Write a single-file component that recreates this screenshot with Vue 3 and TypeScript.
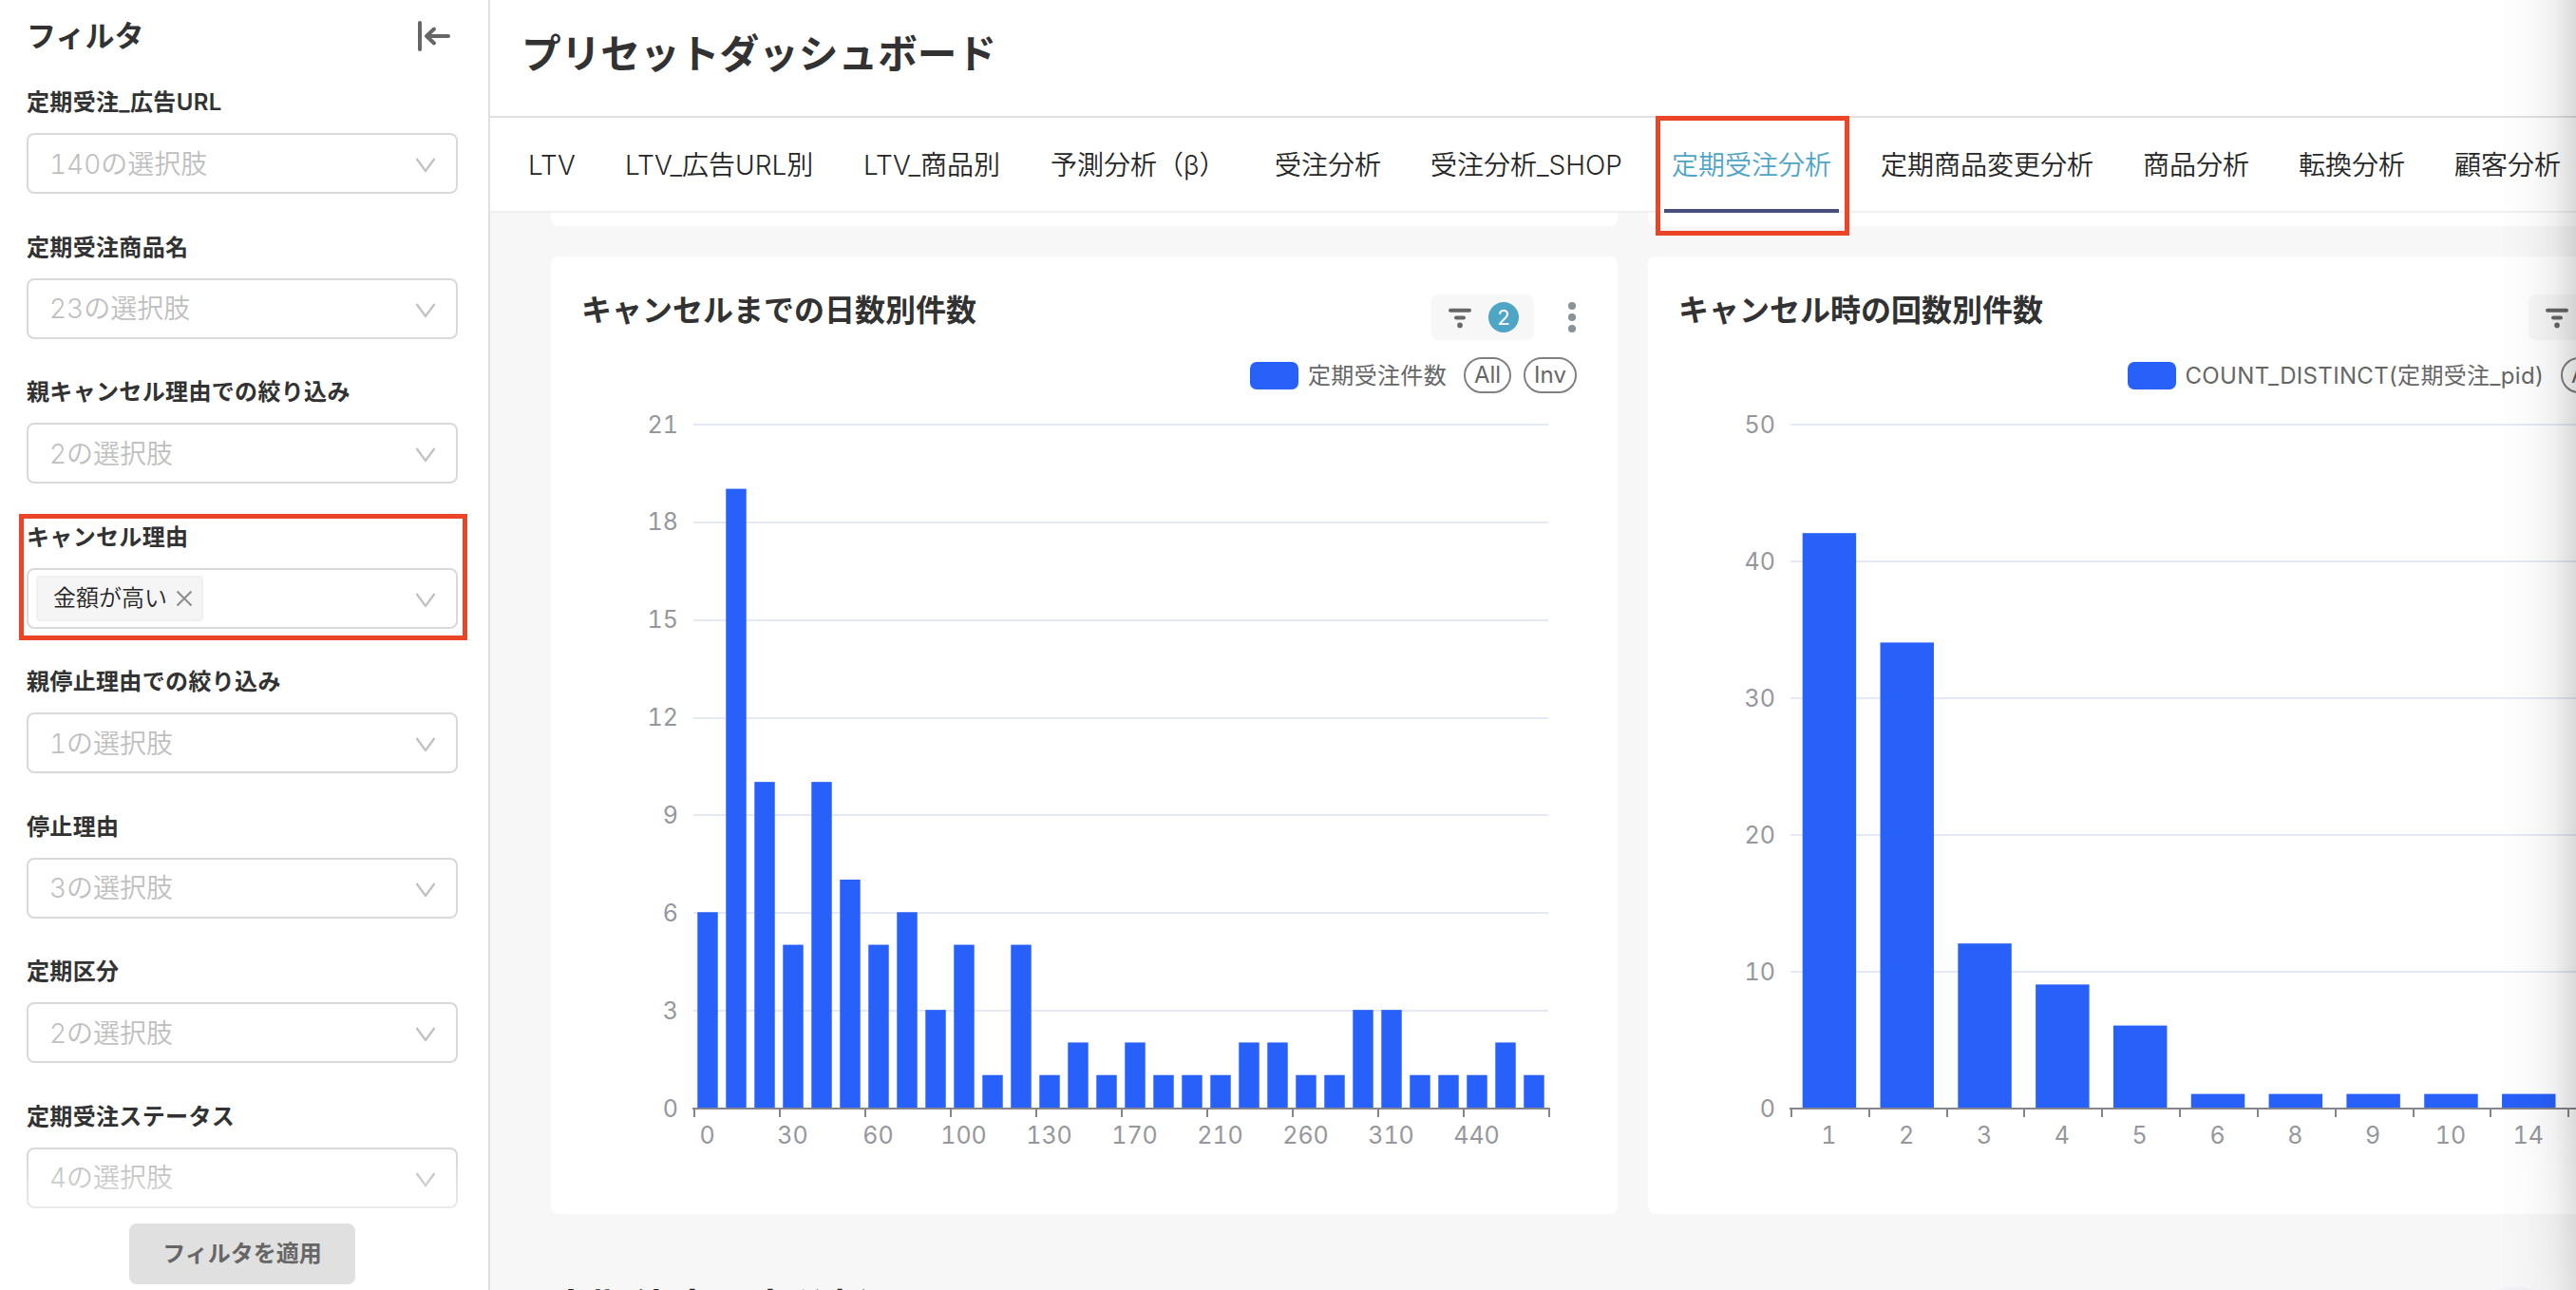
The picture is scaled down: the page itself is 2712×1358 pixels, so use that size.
<script setup lang="ts">
interface Filter {
  label: string
  placeholder?: string
  tag?: string
}
interface Tab {
  label: string
  width: number
  active?: boolean
}
interface Chart {
  title: string
  series: string
  max: number
  step: number
  values: number[]
  slots: number
  barRatio: number
  labelEvery: number
  labels: string[]
}

const filters: Filter[] = [
  { label: '定期受注_広告URL', placeholder: '140の選択肢' },
  { label: '定期受注商品名', placeholder: '23の選択肢' },
  { label: '親キャンセル理由での絞り込み', placeholder: '2の選択肢' },
  { label: 'キャンセル理由', tag: '金額が高い' },
  { label: '親停止理由での絞り込み', placeholder: '1の選択肢' },
  { label: '停止理由', placeholder: '3の選択肢' },
  { label: '定期区分', placeholder: '2の選択肢' },
  { label: '定期受注ステータス', placeholder: '4の選択肢' },
]

const tabs: Tab[] = [
  { label: 'LTV', width: 50 },
  { label: 'LTV_広告URL別', width: 199 },
  { label: 'LTV_商品別', width: 145 },
  { label: '予測分析（β）', width: 184 },
  { label: '受注分析', width: 112 },
  { label: '受注分析_SHOP', width: 202 },
  { label: '定期受注分析', width: 168, active: true },
  { label: '定期商品変更分析', width: 224 },
  { label: '商品分析', width: 112 },
  { label: '転換分析', width: 112 },
  { label: '顧客分析', width: 112 },
]

const charts: Chart[] = [
  {
    title: 'キャンセルまでの日数別件数',
    series: '定期受注件数',
    max: 21,
    step: 3,
    values: [6, 19, 10, 5, 10, 7, 5, 6, 3, 5, 1, 5, 1, 2, 1, 2, 1, 1, 1, 2, 2, 1, 1, 3, 3, 1, 1, 1, 2, 1],
    slots: 30,
    barRatio: 0.715,
    labelEvery: 3,
    labels: ['0', '30', '60', '100', '130', '170', '210', '260', '310', '440'],
  },
  {
    title: 'キャンセル時の回数別件数',
    series: 'COUNT_DISTINCT(定期受注_pid)',
    max: 50,
    step: 10,
    values: [42, 34, 12, 9, 6, 1, 1, 1, 1, 1],
    slots: 11,
    barRatio: 0.69,
    labelEvery: 1,
    labels: ['1', '2', '3', '4', '5', '6', '8', '9', '10', '14'],
  },
]

const LEFT = 150
const TOP = 26
const W = 900
const H = 720
const BASE = TOP + H

const slot = (c: Chart): number => W / c.slots
const barX = (c: Chart, i: number): number => LEFT + slot(c) * (i + (1 - c.barRatio) / 2)
const yOf = (c: Chart, v: number): number => BASE - (v / c.max) * H
const gridValues = (c: Chart): number[] =>
  Array.from({ length: c.max / c.step + 1 }, (_, i) => i * c.step)
const ticks = (c: Chart): number[] =>
  Array.from({ length: Math.floor(c.slots / c.labelEvery) + 1 }, (_, i) => Math.round(LEFT + i * c.labelEvery * slot(c)))
</script>

<template>
  <div class="app">
    <aside class="sidebar">
      <header class="side-head">
        <h2>フィルタ</h2>
        <svg class="collapse" width="36" height="36" viewBox="0 0 36 36">
          <path d="M4 4V32M34 18H12M19 10.5L11 18L19 25.5" />
        </svg>
      </header>
      <div class="filters">
        <div v-for="f in filters" :key="f.label" class="filter">
          <label>{{ f.label }}</label>
          <div class="select">
            <span v-if="f.tag" class="tag">
              {{ f.tag }}
              <svg width="18" height="18" viewBox="0 0 18 18"><path d="M1.5 1.5L16.5 16.5M16.5 1.5L1.5 16.5" /></svg>
            </span>
            <span v-else class="placeholder">{{ f.placeholder }}</span>
            <svg class="chevron" width="22" height="16" viewBox="0 0 22 16"><path d="M1.5 1L11 14L20.5 1" /></svg>
          </div>
          <div v-if="f.tag" class="mark mark-filter"></div>
        </div>
      </div>
      <footer class="side-foot"><button>フィルタを適用</button></footer>
    </aside>

    <main class="main">
      <header class="page-head"><h1>プリセットダッシュボード</h1></header>
      <nav class="tabs">
        <div v-for="t in tabs" :key="t.label" class="tab" :class="{ active: t.active }">
          <span :style="{ width: t.width + 'px' }">{{ t.label }}</span>
          <div v-if="t.active" class="mark mark-tab"></div>
        </div>
      </nav>
      <div class="content">
        <div class="row tail"><div class="card"></div><div class="card"></div></div>
        <div class="row">
          <section v-for="c in charts" :key="c.title" class="card chart-card">
            <div class="card-head">
              <h3>{{ c.title }}</h3>
              <div class="pill">
                <svg width="28" height="24" viewBox="0 0 28 24">
                  <path d="M4 4.8H24M10 12.5H18" />
                  <circle cx="14" cy="20.4" r="2.8" />
                </svg>
                <span class="badge">2</span>
              </div>
              <svg class="dots" width="8" height="32" viewBox="0 0 8 32">
                <circle cx="4" cy="4" r="4" /><circle cx="4" cy="16" r="4" /><circle cx="4" cy="28" r="4" />
              </svg>
            </div>
            <div class="legend">
              <i class="swatch"></i>
              <span class="series">{{ c.series }}</span>
              <span class="chip all">All</span>
              <span class="chip inv">Inv</span>
            </div>
            <svg class="chart" width="1123" height="800" viewBox="0 0 1123 800">
              <g v-for="v in gridValues(c)" :key="v">
                <line v-if="v > 0" class="grid" :x1="LEFT" :x2="LEFT + W" :y1="Math.round(yOf(c, v)) + 1" :y2="Math.round(yOf(c, v)) + 1" />
                <text class="ytext" :x="LEFT - 16" :y="yOf(c, v) + 9.5">{{ v }}</text>
              </g>
              <rect
                v-for="(v, i) in c.values" :key="'b' + i" class="bar"
                :x="barX(c, i)" :y="yOf(c, v)" :width="slot(c) * c.barRatio" :height="BASE - yOf(c, v)"
              />
              <line class="axis" :x1="LEFT - 1" :x2="LEFT + W + 2" :y1="BASE + 1" :y2="BASE + 1" />
              <line v-for="x in ticks(c)" :key="'t' + x" class="axis" :x1="x + 1" :x2="x + 1" :y1="BASE" :y2="BASE + 10" />
              <text
                v-for="(l, i) in c.labels" :key="'l' + i" class="xtext"
                :x="LEFT + slot(c) * (i * c.labelEvery + 0.5) - 0.5" :y="BASE + 37.5"
              >{{ l }}</text>
            </svg>
          </section>
        </div>
        <h2 class="section-title">定期停止理由分析</h2>
      </div>
    </main>
    <div class="float-button"></div>
    <div class="edge-shade"></div>
  </div>
</template>

<style>
body {
  margin: 0;
  overflow: hidden;
}
</style>

<style scoped>
* {
  box-sizing: border-box;
}
.app {
  position: relative;
  display: flex;
  width: 2712px;
  height: 1358px;
  overflow: hidden;
  background: #fff;
  color: #323232;
  font-family: Inter, "Noto Sans CJK JP", sans-serif;
}
h1, h2, h3 {
  margin: 0;
  font-weight: 600;
  white-space: nowrap;
}
.sidebar {
  position: relative;
  flex: none;
  width: 516px;
  height: 1358px;
  border-right: 2px solid #e0e0e0;
  overflow: hidden;
}
.side-head {
  display: flex;
  justify-content: space-between;
  align-items: center;
  height: 76px;
  padding: 0 40px 0 28px;
}
.side-head h2 {
  font-size: 31px;
  line-height: 72px;
}
.collapse path {
  fill: none;
  stroke: #666;
  stroke-width: 4;
  stroke-linecap: round;
  stroke-linejoin: round;
}
.filters {
  padding: 12px 0 0 28px;
}
.filter {
  position: relative;
  height: 152.57px;
}
.filter label {
  display: block;
  height: 52px;
  font-size: 24px;
  line-height: 39px;
  font-weight: 600;
  letter-spacing: 0.34px;
  white-space: nowrap;
}
.select {
  display: flex;
  align-items: center;
  width: 454px;
  height: 64px;
  padding: 0 21px 0 8px;
  border: 2px solid #d9d9d9;
  border-radius: 8px;
  background: #fff;
}
.placeholder {
  padding-left: 14px;
  margin-top: -3px;
  font-size: 28px;
  font-weight: 350;
  font-variant-numeric: tabular-nums;
  color: #bfbfbf;
}
.tag {
  display: flex;
  align-items: center;
  gap: 9px;
  width: 176px;
  height: 48px;
  padding: 0 0 4px 16px;
  border: 2px solid #f0f0f0;
  border-radius: 4px;
  background: #f5f5f5;
  font-size: 24px;
  font-weight: 350;
  color: #262626;
  white-space: nowrap;
}
.tag svg {
  flex: none;
  margin-top: 4px;
}
.tag path {
  fill: none;
  stroke: #8c8c8c;
  stroke-width: 2;
}
.chevron {
  margin: 4px 0 0 auto;
}
.chevron path {
  fill: none;
  stroke: #bfbfbf;
  stroke-width: 2.2;
}
.mark {
  position: absolute;
  border: 5px solid #ec4426;
}
.mark-filter {
  left: -8px;
  top: -5px;
  width: 472px;
  height: 133px;
}
.side-foot {
  position: absolute;
  left: 0;
  right: 0;
  bottom: 0;
  display: flex;
  justify-content: center;
  height: 136px;
  padding: 66px 4px 0 0;
  background: linear-gradient(rgba(255, 255, 255, 0), #fff 80%);
}
.side-foot button {
  width: 238px;
  height: 64px;
  padding: 0 0 6px;
  border: 0;
  border-radius: 8px;
  background: #e0e0e0;
  color: #666;
  font: 600 24px Inter, "Noto Sans CJK JP", sans-serif;
}
.main {
  flex: none;
  width: 2196px;
  overflow: hidden;
}
.page-head {
  height: 124px;
  padding-left: 33px;
  border-bottom: 2px solid #e0e0e0;
}
.page-head h1 {
  font-size: 41.7px;
  line-height: 115px;
}
.tabs {
  display: flex;
  gap: 36px;
  height: 100px;
  padding-left: 32px;
  border-bottom: 2px solid #f0f0f0;
}
.tab {
  position: relative;
  flex: none;
  height: 100px;
  padding: 0 8px;
  font-size: 28px;
  line-height: 101px;
  font-weight: 350;
  color: #262626;
  white-space: nowrap;
}
.tab span {
  display: block;
}
.tab.active {
  color: #4fa5c6;
  border-bottom: 4px solid #484f7c;
}
.mark-tab {
  left: -9px;
  top: -2px;
  width: 204px;
  height: 126px;
  z-index: 2;
}
.content {
  height: 1134px;
  padding-left: 64px;
  overflow: hidden;
  background: #f7f7f7;
}
.row {
  display: flex;
  gap: 32px;
}
.card {
  flex: none;
  width: 1123px;
  background: #fff;
  border-radius: 8px;
}
.tail {
  height: 14px;
  margin-bottom: 32px;
}
.tail .card {
  border-radius: 0 0 8px 8px;
}
.chart-card {
  height: 1008px;
}
.card-head {
  display: flex;
  align-items: center;
  height: 88px;
  padding: 40px 44px 0 32px;
}
.card-head h3 {
  flex: 1;
  margin-top: -15px;
  font-size: 32px;
  line-height: 48px;
}
.pill {
  display: flex;
  align-items: center;
  justify-content: space-between;
  width: 108px;
  height: 48px;
  padding: 0 16px;
  margin-right: 36px;
  border-radius: 8px;
  background: #f7f7f7;
}
.pill path {
  fill: none;
  stroke: #666;
  stroke-width: 4;
  stroke-linecap: round;
}
.pill circle {
  fill: #666;
}
.badge {
  width: 32px;
  height: 32px;
  border-radius: 50%;
  background: #4fa5c6;
  color: #fff;
  font-size: 22px;
  line-height: 32px;
  text-align: center;
}
.dots {
  fill: #879399;
}
.legend {
  display: flex;
  justify-content: flex-end;
  align-items: center;
  height: 62px;
  padding: 12px 43px 0 0;
  font-size: 24px;
  color: #666;
}
.swatch {
  width: 51px;
  height: 29px;
  margin-right: 10px;
  border-radius: 7px;
  background: #2860fa;
}
.series {
  white-space: nowrap;
  margin: -4px 18px 0 0;
  letter-spacing: 0.33px;
}
.chip {
  height: 38px;
  border: 2px solid #808080;
  border-radius: 19px;
  line-height: 33px;
  text-align: center;
}
.all {
  width: 50px;
  margin-right: 13px;
}
.inv {
  width: 56px;
}
.chart {
  display: block;
}
.grid {
  stroke: #e4e9f4;
  stroke-width: 2;
}
.axis {
  stroke: #85868d;
  stroke-width: 2;
}
.bar {
  fill: #2860fa;
}
.ytext, .xtext {
  font-size: 25px;
  font-variant-numeric: tabular-nums;
  fill: #96979c;
}
.ytext {
  text-anchor: end;
}
.xtext {
  text-anchor: middle;
}
.section-title {
  padding: 70px 0 0;
  font-size: 42px;
  line-height: 60px;
  font-weight: 700;
  color: #222;
}
.float-button {
  position: absolute;
  left: 2588px;
  top: 1355px;
  width: 120px;
  height: 120px;
  border-radius: 50%;
  background: #f1f1f7;
}
.edge-shade {
  position: absolute;
  top: 0;
  right: 0;
  width: 80px;
  height: 1358px;
  background: linear-gradient(90deg, rgba(0, 0, 0, 0), rgba(0, 0, 0, 0.02) 40%, rgba(0, 0, 0, 0.06) 72%, rgba(0, 0, 0, 0.15));
  mask-image: linear-gradient(#000 85%, rgba(0, 0, 0, 0.65));
}
</style>
